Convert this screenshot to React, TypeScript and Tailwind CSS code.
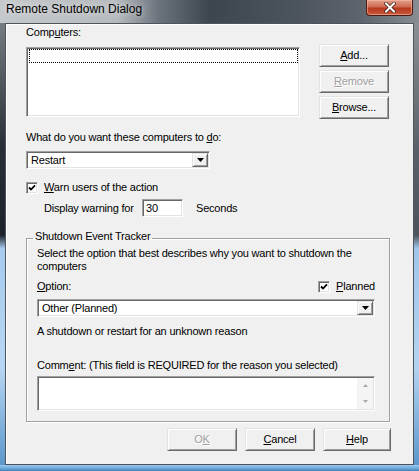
import React from "react";

const raised =
  "border border-t-[#e3e3e3] border-l-[#e3e3e3] border-r-[#696969] border-b-[#696969] shadow-[inset_1px_1px_0_#ffffff,inset_-1px_-1px_0_#a0a0a0] bg-[#f0f0f0]";
const sunken =
  "border border-t-[#a0a0a0] border-l-[#a0a0a0] border-r-white border-b-white shadow-[inset_1px_1px_0_#696969,inset_-1px_-1px_0_#e3e3e3] bg-white";

function Btn({
  children,
  disabled,
  className = "",
}: {
  children: React.ReactNode;
  disabled?: boolean;
  className?: string;
}) {
  return (
    <div
      className={`${raised} h-[23px] flex items-center justify-center ${
        disabled ? "text-[#a0a0a0] [text-shadow:1px_1px_0_#ffffff]" : "text-black"
      } ${className}`}
    >
      <span>{children}</span>
    </div>
  );
}

function Combo({ text, className = "" }: { text: string; className?: string }) {
  return (
    <div className={`${sunken} h-[18px] flex items-stretch p-[1px] ${className}`}>
      <div className="flex-1 pl-[3px] flex items-center leading-[13px]">{text}</div>
      <div className={`${raised} w-[16px] flex items-center justify-center`}>
        <svg width="7" height="4" viewBox="0 0 7 4">
          <path d="M0 0h7L3.5 4z" fill="#000" />
        </svg>
      </div>
    </div>
  );
}

function Check() {
  return (
    <div className={`${sunken} w-[12px] h-[12px] flex items-center justify-center shrink-0`}>
      <svg width="8" height="8" viewBox="0 0 8 8">
        <path d="M1 3.5l2 2 4-4.2" stroke="#000" strokeWidth="1.8" fill="none" />
      </svg>
    </div>
  );
}

function U({ children }: { children: React.ReactNode }) {
  return <span className="underline underline-offset-[1px]">{children}</span>;
}

export default function App() {
  return (
    <div className="w-[419px] h-[471px] flex flex-col overflow-hidden font-['Liberation_Sans',Arial,sans-serif] text-[11px] leading-[15px] tracking-[-0.2px] text-black bg-[#6aa6d8]">
      {/* Title bar */}
      <div className="h-[23px] shrink-0 flex items-start justify-between bg-[linear-gradient(90deg,#c6c9cc_0%,#b6babe_28%,#6a727a_38%,#3d454e_50%,#4b535c_70%,#5d646b_86%,#878d93_100%)]">
        <div className="pl-[6px] pt-[2px] text-[12px] leading-[15px] tracking-normal text-black [text-shadow:0_0_6px_rgba(255,255,255,0.8)]">
          Remote Shutdown Dialog
        </div>
        <div className="mr-[6px] w-[47px] h-[16px] rounded-b-[4px] border border-t-0 border-[#4a1d14] shadow-[inset_0_0_0_1px_rgba(255,190,170,0.55)] bg-[linear-gradient(180deg,#e2a08c_0%,#cf6a50_45%,#b8391e_55%,#c95a3c_100%)] flex items-center justify-center">
          <svg width="12" height="11" viewBox="0 0 12 11">
            <path
              d="M2 1.5l8 8M10 1.5l-8 8"
              stroke="#3a1810"
              strokeWidth="3.4"
              strokeLinecap="square"
            />
            <path
              d="M2 1.5l8 8M10 1.5l-8 8"
              stroke="#ffffff"
              strokeWidth="2"
              strokeLinecap="square"
            />
          </svg>
        </div>
      </div>

      {/* Middle */}
      <div className="flex-1 flex">
        <div className="w-[5px] shrink-0 bg-[linear-gradient(180deg,#777c81_0%,#2a2f37_28%,#1d222a_48%,#a6cbee_51%,#b7d6f3_78%,#5c97cb_100%)]" />
        <div className="flex-1 bg-[#f0f0f0] border border-[#4e545b] shadow-[inset_1px_1px_0_#ffffff] flex flex-col pl-[20px]">
          {/* Top row */}
          <div className="flex items-start">
            <div className="w-[274px] flex flex-col">
              <div className="mt-[1px]">
                Comp<U>u</U>ters:
              </div>
              <div className={`${sunken} mt-[7px] h-[70px] p-[1px]`}>
                <div className="ml-[1px] h-[14px] border border-dotted border-black" />
              </div>
            </div>
            <div className="ml-[19px] mt-[20px] w-[70px] flex flex-col gap-[3px]">
              <Btn>
                <U>A</U>dd...
              </Btn>
              <Btn disabled>
                <U>R</U>emove
              </Btn>
              <Btn>
                <U>B</U>rowse...
              </Btn>
            </div>
          </div>

          <div className="mt-[11px]">
            What do you want these computers to <U>d</U>o:
          </div>
          <Combo text="Restart" className="mt-[6px] w-[184px]" />

          <div className="mt-[11px] flex items-center gap-[6px]">
            <Check />
            <div>
              <U>W</U>arn users of the action
            </div>
          </div>

          <div className="mt-[4px] flex items-center">
            <div className="ml-[18px] w-[98px]">Display warning for</div>
            <div className={`${sunken} w-[41px] h-[18px] pl-[3px] flex items-center`}>30</div>
            <div className="ml-[13px]">Seconds</div>
          </div>

          <fieldset className="mt-[13px] w-[364px] border border-[#a0a0a0] shadow-[1px_1px_0_#ffffff,inset_1px_1px_0_#ffffff] pl-[10px] pr-[14px] pb-[10px] pt-0">
            <legend className="-ml-[4px] px-[2px] leading-[12px] pb-[4px]">
              Shutdown Event Tracker
            </legend>
            <div className="mt-[1px] leading-[13px]">
              Select the option that best describes why you want to shutdown the computers
            </div>
            <div className="mt-[6px] flex items-center justify-between">
              <div>
                <U>O</U>ption:
              </div>
              <div className="flex items-center gap-[6px]">
                <Check />
                <div>
                  <U>P</U>lanned
                </div>
              </div>
            </div>
            <Combo text="Other (Planned)" className="mt-[5px] w-full" />
            <div className="mt-[7px]">A shutdown or restart for an unknown reason</div>
            <div className="mt-[19px]">
              Comm<U>e</U>nt: (This field is REQUIRED for the reason you selected)
            </div>
            <div className={`${sunken} mt-[3px] h-[35px] flex p-[1px]`}>
              <div className="flex-1" />
              <div className="w-[16px] flex flex-col bg-[#f4f4f4]">
                <div className="flex-1 flex items-center justify-center">
                  <svg width="5" height="3" viewBox="0 0 5 3">
                    <path d="M0 3h5L2.5 0z" fill="#a8a8a8" />
                  </svg>
                </div>
                <div className="flex-1 flex items-center justify-center">
                  <svg width="5" height="3" viewBox="0 0 5 3">
                    <path d="M0 0h5L2.5 3z" fill="#a8a8a8" />
                  </svg>
                </div>
              </div>
            </div>
          </fieldset>

          <div className="mt-[6px] w-[365px] flex justify-end gap-[8px]">
            <Btn disabled className="w-[70px]">
              O<U>K</U>
            </Btn>
            <Btn className="w-[70px]">
              <U>C</U>ancel
            </Btn>
            <Btn className="w-[68px]">
              <U>H</U>elp
            </Btn>
          </div>
        </div>
        <div className="w-[5px] shrink-0 bg-[linear-gradient(180deg,#8a9096_0%,#5b6168_28%,#4c535b_48%,#9fc6ea_51%,#b3d3f1_78%,#5c97cb_100%)]" />
      </div>

      {/* Bottom frame */}
      <div className="h-[6px] shrink-0 bg-[linear-gradient(180deg,#9cc8ee_0%,#6aa6d8_60%,#3f7fb8_100%)]" />
    </div>
  );
}
